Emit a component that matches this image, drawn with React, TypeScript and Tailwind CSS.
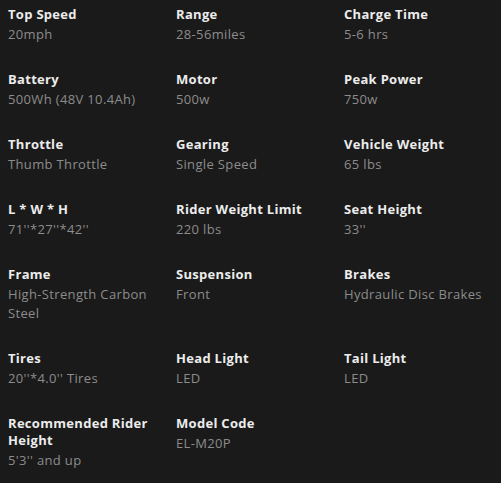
const specs: { label: string; value: string }[] = [
  { label: 'Top Speed', value: '20mph' },
  { label: 'Range', value: '28-56miles' },
  { label: 'Charge Time', value: '5-6 hrs' },
  { label: 'Battery', value: '500Wh (48V 10.4Ah)' },
  { label: 'Motor', value: '500w' },
  { label: 'Peak Power', value: '750w' },
  { label: 'Throttle', value: 'Thumb Throttle' },
  { label: 'Gearing', value: 'Single Speed' },
  { label: 'Vehicle Weight', value: '65 lbs' },
  { label: 'L * W * H', value: '71\'\'*27\'\'*42\'\'' },
  { label: 'Rider Weight Limit', value: '220 lbs' },
  { label: 'Seat Height', value: '33\'\'' },
  { label: 'Frame', value: 'High-Strength Carbon Steel' },
  { label: 'Suspension', value: 'Front' },
  { label: 'Brakes', value: 'Hydraulic Disc Brakes' },
  { label: 'Tires', value: '20\'\'*4.0\'\' Tires' },
  { label: 'Head Light', value: 'LED' },
  { label: 'Tail Light', value: 'LED' },
  { label: 'Recommended Rider Height', value: '5\'3\'\' and up' },
  { label: 'Model Code', value: 'EL-M20P' },
];

export default function App() {
  return (
    <main className="min-h-screen w-[501px] bg-[#1a1a1a] pl-2 pt-[6px] pb-3 font-['Open_Sans',sans-serif]">
      <div className="grid grid-cols-[168px_168px_1fr] gap-y-[27px]">
        {specs.map((spec, index) => (
          <div key={index} className="pr-3">
            <div className="text-[13px] leading-[17px] font-bold tracking-[0.3px] text-[#ececec]">
              {spec.label}
            </div>
            <div className="mt-[2px] text-[13px] leading-[19px] tracking-[0.35px] text-[#8c8c8c]">
              {spec.value}
            </div>
          </div>
        ))}
      </div>
    </main>
  );
}
